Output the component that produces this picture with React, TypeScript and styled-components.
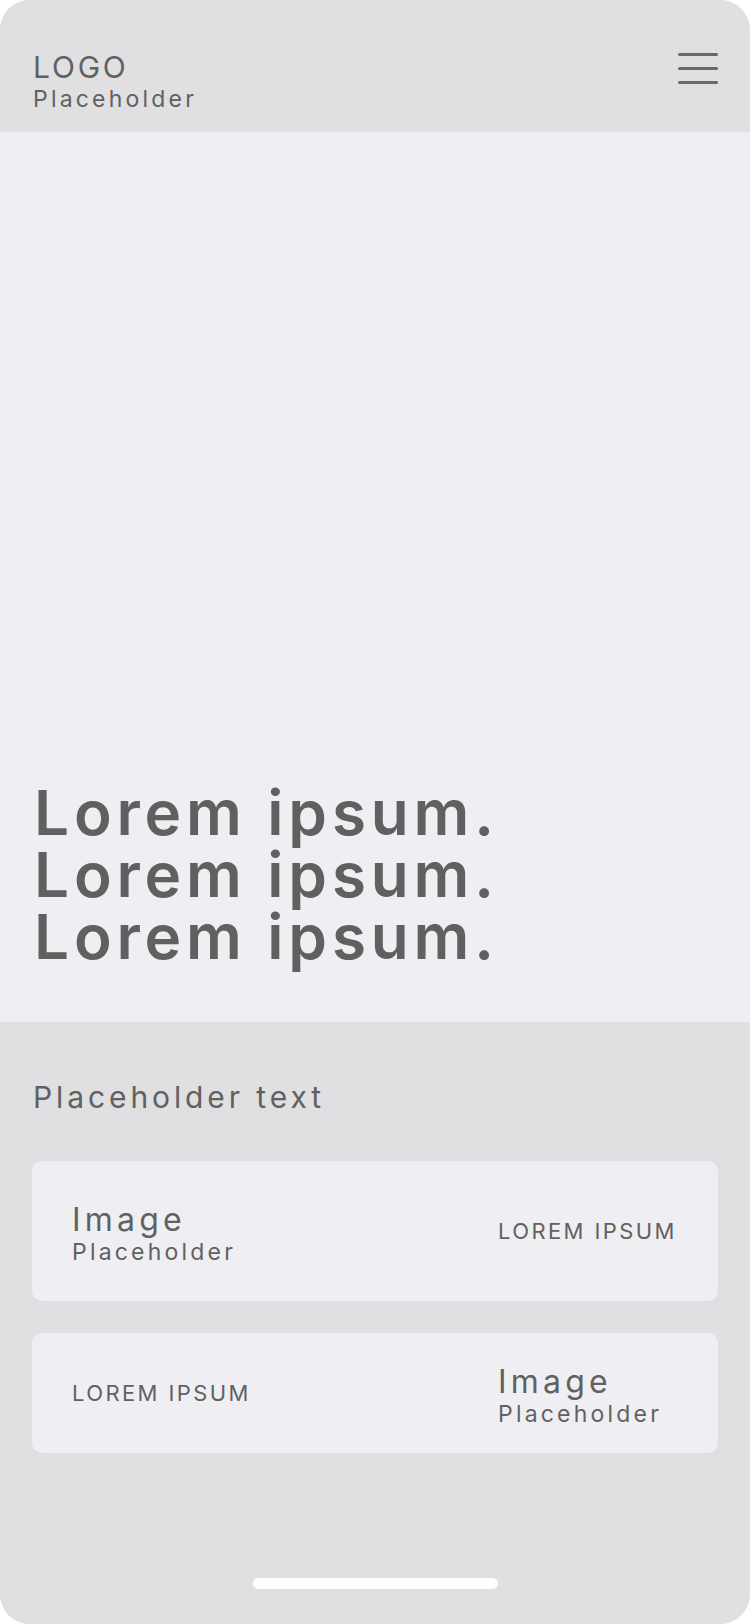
import React from "react";
import styled, { createGlobalStyle } from "styled-components";

const Global = createGlobalStyle`
  html, body { margin: 0; padding: 0; background: #ffffff; }
  body { font-family: "Inter", "Liberation Sans", sans-serif; color: #616161; }
  * { box-sizing: border-box; }
`;

const Screen = styled.div`
  width: 750px;
  height: 1624px;
  display: flex;
  flex-direction: column;
  border-radius: 30px;
  overflow: hidden;
  background: #e0e0e2;
`;

const Header = styled.header`
  height: 132px;
  flex: none;
  display: flex;
  align-items: flex-start;
  justify-content: space-between;
  padding: 50px 32px 0 33px;
  background: #e0e0e2;
`;

const Brand = styled.div`
  display: flex;
  flex-direction: column;
`;

const LogoText = styled.span`
  font-size: 30px;
  line-height: 34px;
  letter-spacing: 2.8px;
  font-weight: 400;
`;

const SubText = styled.span`
  font-size: 23px;
  line-height: 30px;
  letter-spacing: 3.2px;
  font-weight: 400;
`;

const Burger = styled.button`
  margin-top: 3px;
  width: 40px;
  height: 31px;
  padding: 0;
  border: 0;
  background: transparent;
  display: flex;
  flex-direction: column;
  justify-content: space-between;
`;

const BurgerLine = styled.span`
  display: block;
  height: 3px;
  width: 40px;
  border-radius: 2px;
  background: #6a6a6a;
`;

const Hero = styled.section`
  flex: none;
  height: 890px;
  background: #efeff3;
  display: flex;
  flex-direction: column;
  justify-content: flex-end;
  padding: 0 33px 54px 34px;
`;

const Headline = styled.h1`
  margin: 0;
  font-size: 62px;
  line-height: 62px;
  font-weight: 600;
  letter-spacing: 4.85px;
  color: #606060;
`;

const Bottom = styled.section`
  flex: 1;
  display: flex;
  flex-direction: column;
  padding: 56px 32px 0;
  background: #e0e0e2;
`;

const SectionTitle = styled.h2`
  margin: 0 0 45px 1px;
  font-size: 30px;
  line-height: 38px;
  font-weight: 400;
  letter-spacing: 3.9px;
  color: #616161;
`;

const CardList = styled.div`
  display: flex;
  flex-direction: column;
  gap: 32px;
`;

const Card = styled.div<{ $h: number }>`
  height: ${(p) => p.$h}px;
  border-radius: 10px;
  background: #efeff3;
  display: grid;
  grid-template-columns: 1fr 180px;
  align-items: center;
  padding: 0 40px;
`;

const ImageBlock = styled.div`
  display: flex;
  flex-direction: column;
  margin-top: 8px;
`;

const ImageWord = styled.span`
  font-size: 32px;
  line-height: 34px;
  letter-spacing: 4.2px;
`;

const Caps = styled.span`
  font-size: 22px;
  line-height: 28px;
  letter-spacing: 2.4px;
  text-transform: uppercase;
`;

const HomeBar = styled.div`
  margin: auto auto 35px;
  width: 245px;
  height: 11px;
  border-radius: 6px;
  background: #ffffff;
`;

const ImagePlaceholder = () => (
  <ImageBlock>
    <ImageWord>Image</ImageWord>
    <SubText>Placeholder</SubText>
  </ImageBlock>
);

export default function App() {
  return (
    <>
      <Global />
      <Screen>
        <Header>
          <Brand>
            <LogoText>LOGO</LogoText>
            <SubText>Placeholder</SubText>
          </Brand>
          <Burger aria-label="menu">
            <BurgerLine />
            <BurgerLine />
            <BurgerLine />
          </Burger>
        </Header>
        <Hero>
          <Headline>
            Lorem ipsum.
            <br />
            Lorem ipsum.
            <br />
            Lorem ipsum.
          </Headline>
        </Hero>
        <Bottom>
          <SectionTitle>Placeholder text</SectionTitle>
          <CardList>
            <Card $h={140}>
              <ImagePlaceholder />
              <Caps>Lorem ipsum</Caps>
            </Card>
            <Card $h={120}>
              <Caps>Lorem ipsum</Caps>
              <ImagePlaceholder />
            </Card>
          </CardList>
          <HomeBar />
        </Bottom>
      </Screen>
    </>
  );
}
